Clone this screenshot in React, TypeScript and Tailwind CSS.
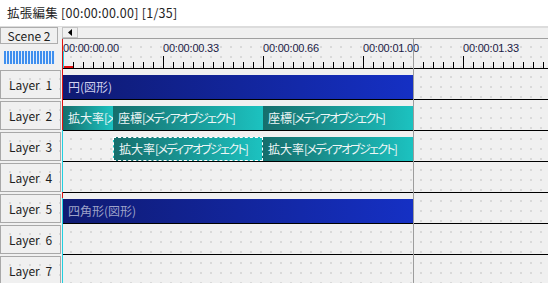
const jp = "font-['Noto_Sans_CJK_JP','Noto_Sans',sans-serif]";

const dots =
  "bg-[radial-gradient(circle,#d9d9d9_0.8px,transparent_0.9px)] bg-[length:10px_10px] bg-[position:4px_3px]";

type Clip = { label: string; width: number; kind: "blue" | "teal"; dim?: boolean; selected?: boolean };
type Row = { name: string; offset: number; clips: Clip[] };

const rows: Row[] = [
  { name: "Layer 1", offset: 0, clips: [{ label: "円(図形)", width: 350, kind: "blue" }] },
  {
    name: "Layer 2",
    offset: 0,
    clips: [
      { label: "拡大率[メディアオブジェクト]", width: 50, kind: "teal" },
      { label: "座標[メディアオブジェクト]", width: 150, kind: "teal" },
      { label: "座標[メディアオブジェクト]", width: 150, kind: "teal" },
    ],
  },
  {
    name: "Layer 3",
    offset: 50,
    clips: [
      { label: "拡大率[メディアオブジェクト]", width: 150, kind: "teal", selected: true },
      { label: "拡大率[メディアオブジェクト]", width: 150, kind: "teal" },
    ],
  },
  { name: "Layer 4", offset: 0, clips: [] },
  { name: "Layer 5", offset: 0, clips: [{ label: "四角形(図形)", width: 350, kind: "blue", dim: true }] },
  { name: "Layer 6", offset: 0, clips: [] },
  { name: "Layer 7", offset: 0, clips: [] },
];

const Ruler = () => {
  const ticks = Array.from({ length: 49 }, (_, i) => i);
  return (
    <svg width="486" height="29" className="absolute left-0 top-0">
      {ticks.map((i) => {
        const x = 1.5 + i * 10;
        const major = i % 10 === 0;
        return <line key={i} x1={x} x2={x} y1={major ? 17 : 23} y2={29} stroke="#000" strokeWidth="1" />;
      })}
      <rect x="1" y="27" width="10" height="2" fill="#e01010" />
    </svg>
  );
};

const ClipBar = ({ c }: { c: Clip }) => {
  // kana in the original UI font are narrow, so squeeze the bracket part
  const cut = c.label.indexOf("[");
  const head = cut >= 0 ? c.label.slice(0, cut) : c.label;
  const tail = cut >= 0 ? c.label.slice(cut) : "";
  return (
    <div
      style={{ width: c.width }}
      className={`h-[24px] shrink-0 overflow-hidden whitespace-nowrap flex items-center pl-[5px] text-[12px] ${
        c.kind === "blue"
          ? "bg-[linear-gradient(90deg,#0f1a72,#1530c4)]"
          : "bg-[linear-gradient(90deg,#166e6c,#1cc2c0)]"
      } ${c.dim ? "text-[#9ea2c8]" : c.kind === "blue" ? "text-[#cfd0ee]" : "text-[#eef6f6]"} ${
        c.selected ? "border border-dashed border-white" : ""
      }`}
    >
      <span>{head}</span>
      {tail && <span className="tracking-[-1.7px] [font-feature-settings:'palt']">{tail}</span>}
    </div>
  );
};

export default function App() {
  return (
    <div className={`relative w-[548px] h-[283px] overflow-hidden bg-[#f0f0f0] text-[#1e1e1e] ${jp}`}>
      <div className="h-[27px] bg-white border-b border-[#dcdcdc] pl-[7px] flex items-center text-[12.5px] tracking-[0.25px] leading-none">
        拡張編集 [00:00:00.00] [1/35]
      </div>

      <div className="flex h-[42px]">
        <div className="w-[62px] shrink-0 flex flex-col">
          <div className="w-[58px] h-[17px] border border-[#adadad] bg-[#f0f0f0] flex items-center justify-center text-[12px] leading-none">
            Scene 2
          </div>
          <div className="ml-[4px] mt-[7px] w-[51px] h-[13px] bg-[repeating-linear-gradient(90deg,#3f8fee_0px_2px,#e4eefa_2px_3px)]" />
        </div>
        <div className="flex-1 flex flex-col">
          <div className="h-[12px] border-b border-[#a0a0a0] flex">
            <div className="w-[16px] h-full border border-[#c4c4c4] bg-[#f0f0f0] flex items-center justify-center">
              <svg width="5" height="7" viewBox="0 0 5 7">
                <path d="M4 0 L0 3.5 L4 7 Z" fill="#000" />
              </svg>
            </div>
            <div className="flex-1 border-t border-[#dcdcdc]" />
          </div>
          <div className={`relative h-[30px] border-b border-black ${dots}`}>
            <Ruler />
            <div className="relative flex pl-px pt-[1px] text-[11px] font-['Liberation_Sans',sans-serif] text-[#1a1a46]">
              {["00:00:00.00", "00:00:00.33", "00:00:00.66", "00:00:01.00", "00:00:01.33"].map((t) => (
                <div key={t} className="w-[100px] shrink-0 tracking-[-0.2px]">
                  {t}
                </div>
              ))}
            </div>
          </div>
        </div>
      </div>

      {rows.map((r) => (
        <div key={r.name} className="flex h-[31px]">
          <div className="w-[62px] shrink-0 py-px">
            <div
              className={`w-[61px] h-full border border-[#a8a8a8] flex items-center justify-center text-[12px] [word-spacing:3px] ${dots}`}
            >
              {r.name}
            </div>
          </div>
          <div className={`flex-1 pl-px pt-[6px] border-b border-black flex ${dots}`}>
            {r.offset > 0 && <div style={{ width: r.offset }} className="shrink-0" />}
            {r.clips.map((c, i) => (
              <ClipBar key={i} c={c} />
            ))}
          </div>
        </div>
      ))}

      {/* end marker + cursor lines */}
      <div className="absolute left-[413px] top-[39px] bottom-0 w-px bg-[#9c9c9c]" />
      <div className="absolute left-[62px] top-[39px] h-[91px] w-px bg-[#e01010]" />
      <div className="absolute left-[62px] top-[130px] bottom-0 w-px bg-[#20d0e0]" />
      <div className="absolute left-[62px] top-[192px] h-[6px] w-px bg-[#e01010]" />
      <div className="absolute left-[63px] top-[51px] h-[17px] w-px bg-[#20d0e0]" />
    </div>
  );
}
